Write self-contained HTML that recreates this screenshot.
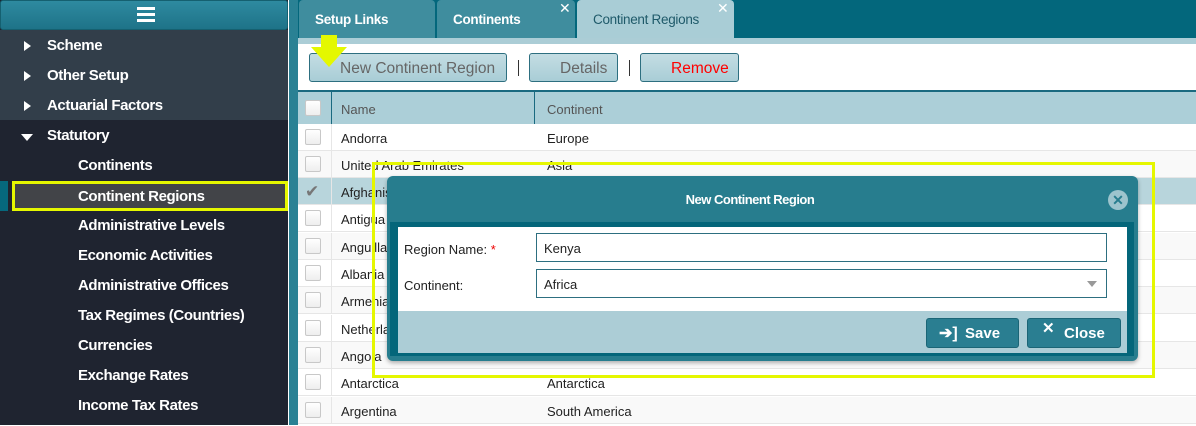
<!DOCTYPE html>
<html><head><style>
*{box-sizing:border-box;margin:0;padding:0}
body{width:1196px;height:425px;overflow:hidden;font-family:"Liberation Sans",sans-serif;background:#fff;position:relative}
.abs{position:absolute}
#side{left:0;top:0;width:288px;height:425px;background:#1f2430}
#menu{left:0;top:0;width:288px;height:30px;background:linear-gradient(#2e8aa0,#1e7388);border:1px solid #156070;border-radius:3px}
.item{position:absolute;left:0;width:288px;height:30px;color:#fff;font-weight:bold;font-size:15px;line-height:32px;letter-spacing:-0.4px}
.top3{background:#323e4a}
.tri{position:absolute;left:24px;top:11px;width:0;height:0;border-left:7px solid #fff;border-top:5.5px solid transparent;border-bottom:5.5px solid transparent}
.tri.down{left:21px;top:14px;border-top:7px solid #fff;border-left:6px solid transparent;border-right:6px solid transparent;border-bottom:0}
#divider{left:288px;top:0;width:10px;height:425px;background:#2a8194;border-left:1px solid #fff}
#tabbar{left:298px;top:0;width:898px;height:38px;background:#03677c}
.tab{position:absolute;top:0;height:38px;border-radius:4px 4px 0 0;font-size:13.5px;font-weight:bold;color:#fff;line-height:40px;padding-left:16px;letter-spacing:-0.3px}
.x{position:absolute;top:-12px;font-size:14px;color:#fff;font-weight:normal}
#sub{left:298px;top:38px;width:898px;height:6px;background:#abcdd6}
.btn{position:absolute;top:53px;height:29px;border:1px solid #2d6f80;border-radius:3px;background:linear-gradient(#c4dde3,#a9cdd6);color:#666;font-size:15.5px;line-height:29px}
.sep{position:absolute;top:60px;width:1px;height:16px;background:#333}
#thead{left:298px;top:90px;width:898px;height:34px;background:#accfd8;border-top:2px solid #1a6a80;font-size:13px;color:#555}
.row{position:absolute;left:298px;width:898px;height:27.3px;border-bottom:1px solid #e6e6e6;font-size:13px;color:#222;line-height:29px}
.cb{position:absolute;left:7px;top:5px;width:16px;height:16px;border:1px solid #c8c8c8;border-radius:2px;background:linear-gradient(#fff,#eee)}
.c1{position:absolute;left:43px}
.c2{position:absolute;left:249px}
.vl{position:absolute;left:33px;top:0;width:1px;height:100%;background:#e6e6e6}
</style></head><body>
<div id="side" class="abs">
 <div id="menu" class="abs"><div class="abs" style="left:136px;top:6px;width:18px;height:3px;background:#fff;box-shadow:0 6px 0 #fff,0 12px 0 #fff"></div></div>
 <div class="item top3" style="top:30px"><span class="tri"></span><span style="position:absolute;left:47px">Scheme</span></div>
 <div class="item top3" style="top:60px"><span class="tri"></span><span style="position:absolute;left:47px">Other Setup</span></div>
 <div class="item top3" style="top:90px"><span class="tri"></span><span style="position:absolute;left:47px">Actuarial Factors</span></div>
 <div class="item" style="top:120px"><span class="tri down"></span><span style="position:absolute;left:47px">Statutory</span></div>
 <div class="item" style="top:150px"><span style="position:absolute;left:78px">Continents</span></div>
 <div class="abs" style="left:0;top:181px;width:8px;height:30px;background:#06687d"></div>
 <div class="item" style="top:181px;left:12px;width:276px;background:#424448;border:3px solid #e5f700;line-height:26px"><span style="position:absolute;left:63px">Continent Regions</span></div>
 <div class="item" style="top:210px"><span style="position:absolute;left:78px">Administrative Levels</span></div>
 <div class="item" style="top:240px"><span style="position:absolute;left:78px">Economic Activities</span></div>
 <div class="item" style="top:270px"><span style="position:absolute;left:78px">Administrative Offices</span></div>
 <div class="item" style="top:300px"><span style="position:absolute;left:78px">Tax Regimes (Countries)</span></div>
 <div class="item" style="top:330px"><span style="position:absolute;left:78px">Currencies</span></div>
 <div class="item" style="top:360px"><span style="position:absolute;left:78px">Exchange Rates</span></div>
 <div class="item" style="top:390px"><span style="position:absolute;left:78px">Income Tax Rates</span></div>
</div>
<div id="divider" class="abs"></div>
<div id="tabbar" class="abs">
 <div class="tab" style="left:1px;width:136px;background:#3f8d9e">Setup Links</div>
 <div class="tab" style="left:139px;width:138px;background:#3f8d9e">Continents<span class="x" style="left:122px;top:-12px">✕</span></div>
 <div class="tab" style="left:279px;width:157px;background:#a9cdd6;color:#1f5a6a;font-weight:normal">Continent Regions<span class="x" style="left:140px">✕</span></div>
</div>
<div id="sub" class="abs"></div>
<div class="btn" style="left:309px;width:198px;padding-left:30px">New Continent Region</div>
<svg class="abs" style="left:311px;top:33px" width="38" height="36"><polygon points="10,2 26,2 26,14 36,14 18,34 0,14 10,14" fill="#e4f800"/></svg>
<div class="sep" style="left:518px"></div>
<div class="btn" style="left:529px;width:89px;padding-left:30px">Details</div>
<div class="sep" style="left:629px"></div>
<div class="btn" style="left:640px;width:99px;padding-left:30px;color:#f00">Remove</div>
<div id="thead" class="abs"><div class="cb" style="top:8px"></div><div class="vl" style="background:#1a6a80"></div><span class="c1" style="top:10px">Name</span><div class="abs" style="left:236px;top:0;width:1px;height:32px;background:#1a6a80"></div><span class="c2" style="top:10px">Continent</span></div>

<div class="row" style="top:124px"><div class="cb"></div><div class="vl"></div><span class="c1">Andorra</span><span class="c2">Europe</span></div>
<div class="row" style="top:151px;background:#f9f9f9"><div class="cb"></div><div class="vl"></div><span class="c1">United Arab Emirates</span><span class="c2">Asia</span></div>
<div class="row" style="top:178px;background:#b8d5dc"><div class="cb" style="border:none;background:none;color:#777;font-size:17px;line-height:18px">✔</div><div class="vl"></div><span class="c1">Afghanistan</span></div>
<div class="row" style="top:205px"><div class="cb"></div><div class="vl"></div><span class="c1">Antigua</span></div>
<div class="row" style="top:233px;background:#f9f9f9"><div class="cb"></div><div class="vl"></div><span class="c1">Anguilla</span></div>
<div class="row" style="top:260px"><div class="cb"></div><div class="vl"></div><span class="c1">Albania</span></div>
<div class="row" style="top:287px;background:#f9f9f9"><div class="cb"></div><div class="vl"></div><span class="c1">Armenia</span></div>
<div class="row" style="top:315px"><div class="cb"></div><div class="vl"></div><span class="c1">Netherlands</span></div>
<div class="row" style="top:342px;background:#f9f9f9"><div class="cb"></div><div class="vl"></div><span class="c1">Angola</span></div>
<div class="row" style="top:369px"><div class="cb"></div><div class="vl"></div><span class="c1">Antarctica</span><span class="c2">Antarctica</span></div>
<div class="row" style="top:397px;background:#f9f9f9"><div class="cb"></div><div class="vl"></div><span class="c1">Argentina</span><span class="c2">South America</span></div>

<div class="abs" style="left:372px;top:162px;width:783px;height:216px;border:3px solid #e5f700"></div>
<div class="abs" style="left:387px;top:176px;width:751px;height:185px;background:#277d8e;border-radius:6px;box-shadow:0 2px 4px rgba(0,0,0,.3)">
 <div class="abs" style="left:0;top:0;width:726px;height:46px;line-height:48px;text-align:center;color:#fff;font-weight:bold;font-size:13px;letter-spacing:-0.5px">New Continent Region</div>
 <div class="abs" style="left:721px;top:14px;width:20px;height:20px;border-radius:50%;background:#9dc4cd;color:#277d8e;font-size:14px;font-weight:bold;text-align:center;line-height:20px">✕</div>
 <div class="abs" style="left:3px;top:46px;width:744px;height:134px;background:#04667a;padding:5px 7px 5px 8px">
  <div style="position:relative;width:729px;height:84px;background:#fff;font-size:13px;color:#222">
   <span class="abs" style="left:6px;top:15px">Region Name: <span style="color:#e00">*</span></span>
   <div class="abs" style="left:138px;top:6px;width:571px;height:29px;border:1px solid #2d6f80;padding-left:7px;line-height:29px">Kenya</div>
   <span class="abs" style="left:6px;top:51px">Continent:</span>
   <div class="abs" style="left:138px;top:42px;width:571px;height:29px;border:1px solid #2d6f80;padding-left:7px;line-height:29px">Africa<span class="abs" style="right:9px;top:11px;border-top:6px solid #999;border-left:5px solid transparent;border-right:5px solid transparent"></span></div>
  </div>
  <div style="position:relative;width:729px;height:42px;background:#accdd6">
   <div class="abs" style="left:528px;top:7px;width:93px;height:30px;background:#2a7e91;border:1px solid #1b6576;border-radius:3px;color:#fff;font-weight:bold;font-size:15px;line-height:30px;padding-left:38px">Save<span class="abs" style="left:12px;top:0;font-size:16px">➔]</span></div>
   <div class="abs" style="left:629px;top:7px;width:94px;height:30px;background:#2a7e91;border:1px solid #1b6576;border-radius:3px;color:#fff;font-weight:bold;font-size:15px;line-height:30px;padding-left:36px">Close<span class="abs" style="left:14px;top:-5px">✕</span></div>
  </div>
 </div>
</div>
</body></html>
